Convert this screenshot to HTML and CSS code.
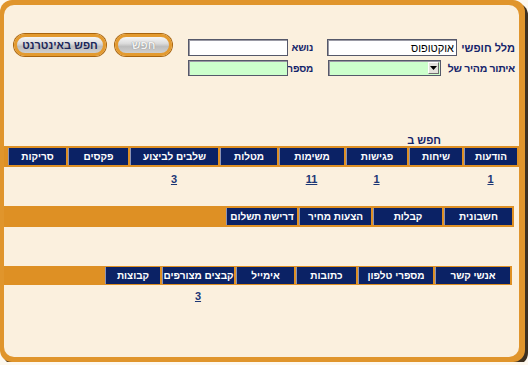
FILE: index.html
```html
<!DOCTYPE html>
<html lang="he">
<head>
<meta charset="utf-8">
<link rel="stylesheet" href="styles.css">
</head>
<body>
<div class="frame">
  <div class="panel">
    <div class="top">
      <div class="form">
        <div class="frow r1">
          <label class="lbl l1">מלל חופשי</label>
          <input class="inp w130" type="text" value="אוקטופוס">
          <label class="lbl l2">נושא</label>
          <input class="inp w100" type="text" value="">
        </div>
        <div class="frow r2">
          <label class="lbl l3">איתור מהיר של</label>
          <div class="sel"><span class="arrow"><svg width="7" height="4" viewBox="0 0 7 4"><path d="M0 0h7L3.5 4z" fill="#000"/></svg></span></div>
          <label class="lbl l2">מספר</label>
          <input class="inp w100 green" type="text" value="">
        </div>
      </div>
      <div class="btns">
        <button class="btn b-search">חפש</button>
        <button class="btn b-web">חפש באינטרנט</button>
      </div>
    </div>

    <div class="caption">חפש ב</div>

    <div class="tabs t1">
      <div class="cols cols1">
        <div class="th">הודעות</div>
        <div class="th">שיחות</div>
        <div class="th">פגישות</div>
        <div class="th">משימות</div>
        <div class="th">מטלות</div>
        <div class="th">שלבים לביצוע</div>
        <div class="th">פקסים</div>
        <div class="th">סריקות</div>
      </div>
    </div>
    <div class="cols cols1 vals v1">
      <div class="td"><a href="#">1</a></div>
      <div class="td"></div>
      <div class="td"><a href="#">1</a></div>
      <div class="td"><a href="#">11</a></div>
      <div class="td"></div>
      <div class="td"><a href="#">3</a></div>
      <div class="td"></div>
      <div class="td"></div>
    </div>

    <div class="tabs t2">
      <div class="cols cols2">
        <div class="th">חשבונית</div>
        <div class="th">קבלות</div>
        <div class="th">הצעות מחיר</div>
        <div class="th">דרישת תשלום</div>
      </div>
    </div>

    <div class="tabs t3">
      <div class="cols cols3">
        <div class="th">אנשי קשר</div>
        <div class="th">מספרי טלפון</div>
        <div class="th">כתובות</div>
        <div class="th">אימייל</div>
        <div class="th">קבצים מצורפים</div>
        <div class="th">קבוצות</div>
      </div>
    </div>
    <div class="cols cols3 vals v3">
      <div class="td"></div>
      <div class="td"></div>
      <div class="td"></div>
      <div class="td"></div>
      <div class="td"><a href="#">3</a></div>
      <div class="td"></div>
    </div>
  </div>
</div>
</body>
</html>
```
FILE: styles.css
```css
html, body {
  margin: 0;
  padding: 0;
}
body {
  background: #fdf8ef;
  font-family: "Liberation Sans", Arial, sans-serif;
  font-size: 11px;
}
.frame {
  width: 525px;
  height: 362px;
  box-sizing: border-box;
  padding: 5px 6px 5px 4px;
  background: #e0952c;
  border-radius: 12px;
  box-shadow: 3px 3px 0 #3d3020;
}
.panel {
  height: 100%;
  background: #fbf0de;
  border-radius: 10px;
  direction: rtl;
}

/* top section */
.top {
  display: flex;
  align-items: flex-start;
  padding-top: 29px;
  padding-right: 4px;
}
.form {
  margin-top: 5px;
  display: flex;
  flex-direction: column;
  gap: 4px;
}
.frow {
  display: flex;
  align-items: center;
}
.r1 { height: 17px; }
.r2 { height: 16px; }
.lbl {
  font-weight: bold;
  color: #14246a;
  white-space: nowrap;
  text-align: right;
  font-size: 11px;
}
.l1 { width: 53px; margin-left: 5px; }
.l3 { width: 68px; margin-left: 6px; font-size: 10.5px; letter-spacing: -0.3px; }
.l2 { width: 24px; padding-right: 2px; margin-left: 1px; font-size: 10px; letter-spacing: -0.2px; }
.w130 + .l2 { margin-right: 12px; }
.sel + .l2 { margin-right: 13px; }

.inp {
  box-sizing: border-box;
  height: 100%;
  margin: 0;
  padding: 0 2px;
  border: 1px solid #55586a;
  box-shadow: inset 1px 1px 0 #9a9aa4;
  background: #fff;
  font-family: "Liberation Sans", Arial, sans-serif;
  font-size: 11px;
  color: #000;
  direction: rtl;
  outline: none;
}
.w130 { width: 130px; }
.w100 { width: 100px; }
.green { background: #ccffcc; }
.sel {
  box-sizing: border-box;
  width: 113px;
  height: 100%;
  border: 1px solid #55586a;
  box-shadow: inset 1px 1px 0 #9a9aa4;
  background: #ccffcc;
  display: flex;
  justify-content: flex-start;
  padding: 1px 1px 1px 0;
}
.arrow {
  width: 11px;
  height: 100%;
  box-sizing: border-box;
  background: #e4e2dc;
  border: 1px solid;
  border-color: #fff #6e6e6e #6e6e6e #fff;
  display: flex;
  align-items: center;
  justify-content: center;
}

.btns {
  display: flex;
  gap: 9px;
  margin-right: 16px;
}
.btn {
  box-sizing: border-box;
  height: 22px;
  margin: 0;
  padding: 0;
  border: 3px solid #e39a2f;
  border-radius: 11px;
  box-shadow: 0 0 0 1px #a9650f;
  background: linear-gradient(to bottom, #f6f6f6 0%, #dcdcdc 40%, #bdbdbd 60%, #cfcfcf 100%);
  font-family: "Liberation Sans", Arial, sans-serif;
  font-size: 11px;
  font-weight: bold;
  color: #1a2658;
  cursor: pointer;
}
.b-search {
  width: 57px;
  color: #f3f3f3;
  text-shadow: 0 0 1px #6d6d6d;
}
.b-web { width: 92px; }

.caption {
  margin-top: 58px;
  padding-right: 78px;
  line-height: 12px;
  font-weight: bold;
  color: #14246a;
}

/* tab bars */
.tabs {
  background: #de9024;
}
.cols {
  display: grid;
  column-gap: 2px;
}
.cols1 { grid-template-columns: 53px 53px 61px 65px 57px 88px 60px 1fr; }
.cols2 { grid-template-columns: 68px 69px 72px 71px 1fr; }
.cols3 { grid-template-columns: 75px 75px 60px 58px 72px 55px 1fr; }

.th {
  background: #0b2265;
  color: #fff;
  font-weight: bold;
  font-size: 10px;
  text-align: center;
  line-height: 17px;
  height: 17px;
  white-space: nowrap;
  border-left: 1px solid #8c93b4;
}
.td {
  text-align: center;
  font-weight: bold;
}
.td a {
  color: #1c3775;
  text-decoration: underline;
}

.t1 { padding: 2px 2px 2px 4px; }
.v1 { margin: 0 2px 0 4px; line-height: 24px; }

.t2 { margin: 15px 5px 0 0; padding: 2px 2px 2px 0; }

.t3 { margin: 39px 7px 0 0; padding: 1px 2px 1px 0; }
.v3 { margin: 0 9px 0 0; line-height: 22px; }
```
